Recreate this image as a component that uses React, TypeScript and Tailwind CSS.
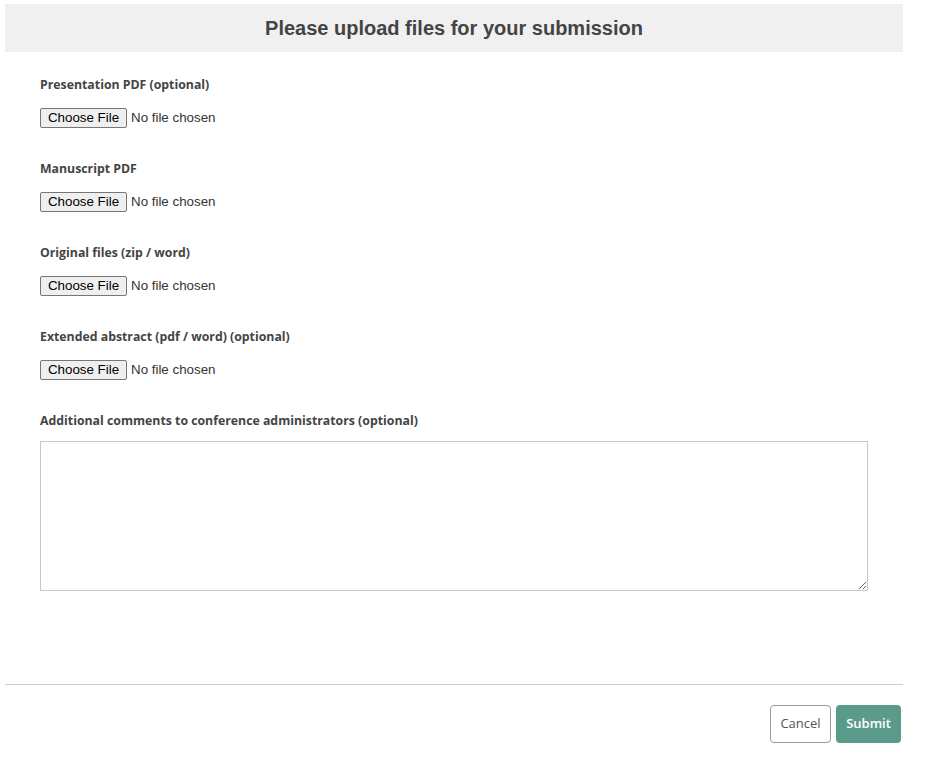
import React from "react";

const fields = [
  "Presentation PDF (optional)",
  "Manuscript PDF",
  "Original files (zip / word)",
  "Extended abstract (pdf / word) (optional)",
];

function FilePicker() {
  return (
    <div className="flex items-center h-[20px] font-['Liberation_Sans',Arial,sans-serif] text-[13.33px] text-[#222]">
      <span className="h-[20px] w-[87px] flex items-center justify-center bg-[#efefef] border border-[#767676] rounded-[2px] text-black leading-none">
        Choose File
      </span>
      <span className="ml-[4px] text-[#333]">No file chosen</span>
    </div>
  );
}

export default function App() {
  return (
    <div className="w-[927px] h-[762px] bg-white relative font-['Open_Sans',sans-serif]">
      <div className="pt-[4px] pl-[5px] w-[903px]">
        <div className="h-[48px] bg-[#f0f0f0] flex items-center justify-center">
          <h1 className="font-['Liberation_Sans',Arial,sans-serif] font-bold text-[20px] text-[#444]">
            Please upload files for your submission
          </h1>
        </div>
      </div>
      <div className="pl-[40px] pt-[24px]">
        {fields.map((f) => (
          <div key={f} className="h-[84px]">
            <div className="text-[12.3px] font-bold text-[#444] leading-[17px]">{f}</div>
            <div className="mt-[15px]">
              <FilePicker />
            </div>
          </div>
        ))}
        <div className="text-[12.3px] font-bold text-[#444] leading-[17px]">
          Additional comments to conference administrators (optional)
        </div>
        <textarea className="mt-[12px] block w-[828px] h-[150px] border border-[#c8c8c8] rounded-none resize" />
      </div>
      <div className="mt-[93px] ml-[5px] w-[898px] border-t border-[#cccccc]" />
      <div className="mt-[20px] w-[901px] flex justify-end gap-[5px]">
        <button className="h-[38px] w-[61px] border border-[#999] rounded-[4px] bg-white text-[13px] text-[#555]">
          Cancel
        </button>
        <button className="h-[38px] w-[65px] rounded-[4px] bg-[#5b9b8b] text-[13px] font-semibold text-white">
          Submit
        </button>
      </div>
    </div>
  );
}
